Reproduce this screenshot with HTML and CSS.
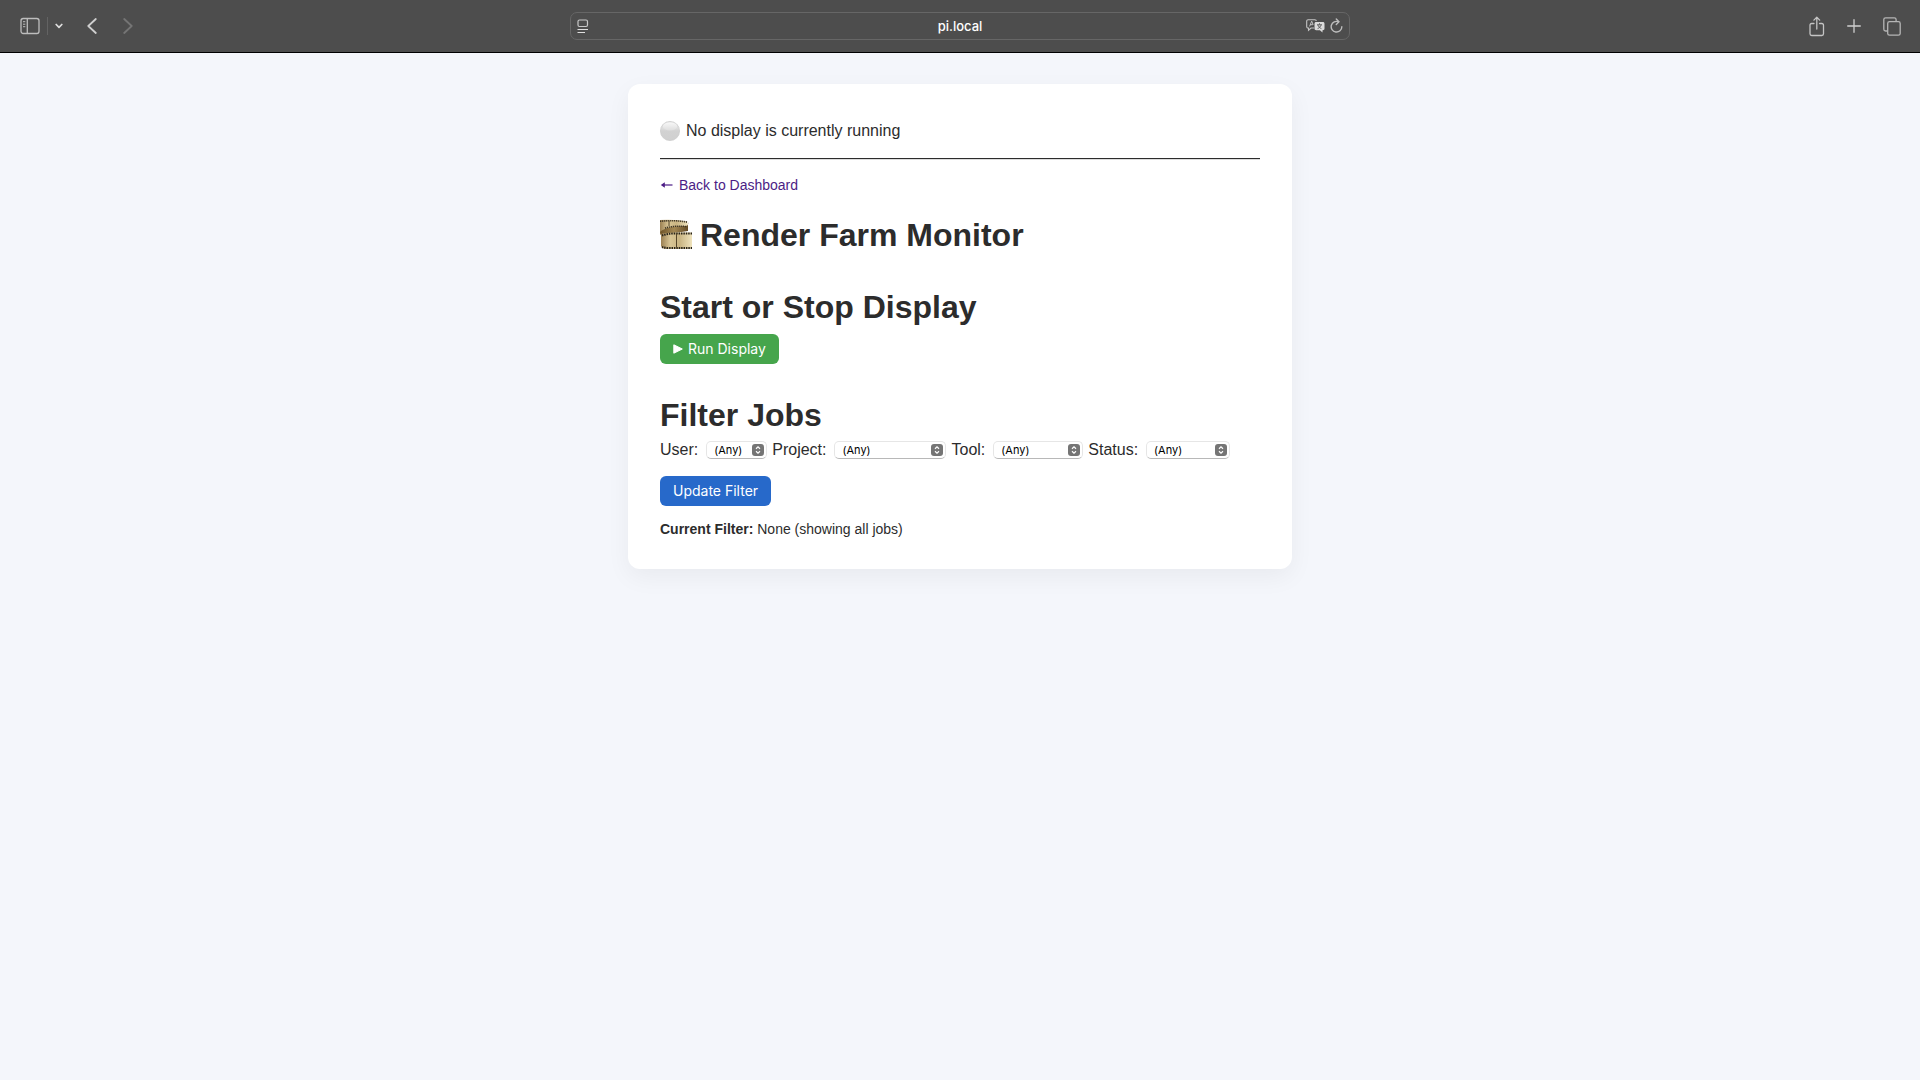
FILE: index.html
```html
<!DOCTYPE html>
<html lang="en">
<head>
<meta charset="utf-8">
<meta name="viewport" content="width=device-width, initial-scale=1">
<title>Render Farm Monitor</title>
<link rel="stylesheet" href="styles.css">
</head>
<body>
<header class="toolbar">
  <div class="tools tools-left">
    <button class="tool" type="button" aria-label="Show sidebar">
      <svg width="20" height="18" viewBox="0 0 20 18" fill="none" stroke="#bdbdbd" stroke-width="1.3"><rect x="1" y="1.500" width="18" height="15" rx="2.200"/><path d="M7.300 1.500v15"/><path d="M3 4.700h2.300M3 7.200h2.300M3 9.700h2.300" stroke-width="1"/></svg>
    </button>
    <span class="divider"></span>
    <button class="tool tool-menu" type="button" aria-label="Tab groups">
      <svg width="8" height="6" viewBox="0 0 8 6" fill="none" stroke="#dedede" stroke-width="1.700" stroke-linecap="round" stroke-linejoin="round"><path d="M1.200 1.500 4 4.300l2.800-2.800"/></svg>
    </button>
    <button class="tool tool-back" type="button" aria-label="Back">
      <svg width="10" height="16" viewBox="0 0 10 16" fill="none" stroke="#cfcfcf" stroke-width="1.800" stroke-linecap="round" stroke-linejoin="round"><path d="M8.800 1 1.300 8l7.500 7"/></svg>
    </button>
    <button class="tool tool-forward" type="button" aria-label="Forward">
      <svg width="10" height="16" viewBox="0 0 10 16" fill="none" stroke="#757575" stroke-width="1.800" stroke-linecap="round" stroke-linejoin="round"><path d="m1.200 1 7.500 7-7.500 7"/></svg>
    </button>
  </div>
  <div class="address">
    <button class="tool" type="button" aria-label="Page settings">
      <svg width="12" height="15" viewBox="0 0 12 15" fill="none" stroke="#c9c9c9" stroke-width="1.200"><rect x="1" y="1" width="9.500" height="6.500" rx="1.500"/><path d="M.5 10.500h10.500M.5 13.500h7.500" stroke="#dedede"/></svg>
    </button>
    <input class="address-input" type="text" value="pi.local" aria-label="Address">
    <div class="address-tools">
      <button class="tool" type="button" aria-label="Translate">
        <svg width="19" height="14" viewBox="0 0 19 14" fill="none"><path d="M8 9H5l-2.500 2.200V9H2.200C1.200 9 .7 8.500.7 7.500V2.200C.7 1.200 1.200.7 2.200.7h6.600c1 0 1.500.5 1.500 1.300" stroke="#c4c4c4" stroke-width="1.100"/><path d="m3.600 7.400 2.100-5.200 1.500 3.600M4.200 5.700h2.700" stroke="#c4c4c4"/><path d="M10.200 3h6.600c1.100 0 1.700.6 1.700 1.700v4.800c0 1.100-.6 1.700-1.700 1.700h-.3v2.300l-2.600-2.300h-3.700c-1.100 0-1.700-.6-1.700-1.700V4.700C8.500 3.600 9.100 3 10.200 3Z" fill="#dcdcdc"/><path d="M13.500 4.300v1.200M11 5.800h5M12 6.200c.6 1.500 1.700 2.700 3.400 3.400M15 6.200c-.6 1.500-1.700 2.700-3.400 3.400" stroke="#505050" stroke-width=".9"/></svg>
      </button>
      <button class="tool" type="button" aria-label="Reload">
        <svg width="13" height="16" viewBox="0 0 12 15" fill="none" stroke="#bdbdbd" stroke-width="1.300" stroke-linecap="round" stroke-linejoin="round"><path d="M8 3.600A5 5 0 1 0 11 8.200"/><path d="M5.800.9 8.300 3.600 5.800 6"/></svg>
      </button>
    </div>
  </div>
  <div class="tools tools-right">
    <button class="tool" type="button" aria-label="Share">
      <svg width="16" height="21" viewBox="0 0 16 21" fill="none" stroke="#c4c4c4" stroke-width="1.300" stroke-linecap="round" stroke-linejoin="round"><path d="M5 7.500H2.700C1.600 7.500 1 8.100 1 9.200v8.600c0 1.100.6 1.700 1.700 1.700h10.100c1.100 0 1.700-.6 1.700-1.700V9.200c0-1.100-.6-1.700-1.700-1.700h-2.300M7.800 13V1.300M4.900 4.100l2.900-2.900 2.900 2.900"/></svg>
    </button>
    <button class="tool" type="button" aria-label="New tab">
      <svg width="14" height="14" viewBox="0 0 14 14" fill="none" stroke="#cfcfcf" stroke-width="1.300" stroke-linecap="round"><path d="M7 .7v12.600M.7 7h12.600"/></svg>
    </button>
    <button class="tool" type="button" aria-label="Tab overview">
      <svg width="18" height="19" viewBox="0 0 18 19" fill="none" stroke="#b5b5b5" stroke-width="1.300"><path d="M4.700 14H2.600C1.500 14 .8 13.300.8 12.200V2.600C.8 1.500 1.500.8 2.600.8h8.700c1.100 0 1.800.7 1.800 1.800v2"/><rect x="4.700" y="4.700" width="12.500" height="13.500" rx="1.800"/></svg>
    </button>
  </div>
</header>

<main class="page">
  <section class="card">
    <p class="status">
      <svg width="20" height="20" viewBox="0 0 20 20" aria-hidden="true"><defs><linearGradient id="ball" x2="0" y2="1"><stop offset="0" stop-color="#d0d0d0"/><stop offset=".35" stop-color="#dedede"/><stop offset=".5" stop-color="#d2d2d2"/><stop offset="1" stop-color="#d0d0d0"/></linearGradient><linearGradient id="shine" x2="0" y2="1"><stop offset="0" stop-color="#f8f8f8"/><stop offset="1" stop-color="#dedede"/></linearGradient></defs><circle cx="10" cy="10" r="9.600" fill="url(#ball)" stroke="#cacaca" stroke-width=".7"/><ellipse cx="10" cy="5.300" rx="7.200" ry="4.100" fill="url(#shine)"/></svg>
      <span>No display is currently running</span>
    </p>
    <hr class="rule">
    <a class="back" href="#">
      <svg width="13" height="8" viewBox="0 0 13 8" aria-hidden="true"><path d="M4 4h8.500" stroke="#4b1c85" stroke-width="1.200"/><path d="M.8 4 4.800 1.300v5.400Z" fill="#4b1c85"/></svg>
      <span>Back to Dashboard</span>
    </a>
    <h1 class="heading">
      <svg width="32" height="32" viewBox="0 0 32 32" aria-hidden="true"><defs><linearGradient id="film" x2="1"><stop offset="0" stop-color="#9b8052"/><stop offset=".3" stop-color="#d9c696"/><stop offset=".6" stop-color="#c9b482"/><stop offset="1" stop-color="#efe3bd"/></linearGradient><linearGradient id="fold" x2="1"><stop offset="0" stop-color="#6d5226"/><stop offset=".5" stop-color="#a38854"/><stop offset="1" stop-color="#644b25"/></linearGradient></defs><path d="M0 1q15-1 27 1.500 2 3-1 8L4 13 0 16Z" fill="url(#film)"/><path d="M0 13q6-6 26-6 3-1 2-4v9q-6 1-14 2L2 18Z" fill="url(#fold)"/><path d="M1 15q5-1.500 14-1.500h17V30H6q-4 0-5-3Z" fill="url(#film)"/><path d="M0 2.300q15-1.500 27 .8" fill="none" stroke="#3d3424" stroke-width="1.600" stroke-dasharray="1.200 .8"/><path d="M5 9q9-2.500 21-1.500" fill="none" stroke="#3d3424" stroke-width="1.500" stroke-dasharray="1.200 .8"/><path d="M2 16.500q5-2 13-2h17" fill="none" stroke="#292318" stroke-width="2" stroke-dasharray="1.500 .9"/><path d="M2 28q3 1 7 1h23" fill="none" stroke="#292318" stroke-width="2" stroke-dasharray="1.500 .9"/><path d="M16.500 15v13.500M9 2v5" stroke="#554528"/></svg>
      <span>Render Farm Monitor</span>
    </h1>

    <h1 class="heading">Start or Stop Display</h1>
    <form class="action">
      <button class="btn btn-run" type="button">
        <svg width="10" height="10" viewBox="0 0 10 10" aria-hidden="true"><path d="M.8.8 9.300 5 .8 9.200Z" fill="#fff" stroke="#fff" stroke-linejoin="round"/></svg>
        <span>Run Display</span>
      </button>
    </form>

    <h1 class="heading">Filter Jobs</h1>
    <form class="action">
      <div class="filters">
        <div class="field">
          <label for="user">User:</label>
          <span class="picker picker-user"><select id="user"><option>(Any)</option></select><svg width="12" height="12" viewBox="0 0 12 12" aria-hidden="true"><rect width="12" height="12" rx="3" fill="#757575"/><path d="M4 4.700 6 2.800l2 1.900M4 7.300l2 1.900 2-1.900" fill="none" stroke="#fff" stroke-width="1.200"/></svg></span>
        </div>
        <div class="field">
          <label for="project">Project:</label>
          <span class="picker picker-project"><select id="project"><option>(Any)</option></select><svg width="12" height="12" viewBox="0 0 12 12" aria-hidden="true"><rect width="12" height="12" rx="3" fill="#757575"/><path d="M4 4.700 6 2.800l2 1.900M4 7.300l2 1.900 2-1.900" fill="none" stroke="#fff" stroke-width="1.200"/></svg></span>
        </div>
        <div class="field">
          <label for="tool">Tool:</label>
          <span class="picker picker-tool"><select id="tool"><option>(Any)</option></select><svg width="12" height="12" viewBox="0 0 12 12" aria-hidden="true"><rect width="12" height="12" rx="3" fill="#757575"/><path d="M4 4.700 6 2.800l2 1.900M4 7.300l2 1.900 2-1.900" fill="none" stroke="#fff" stroke-width="1.200"/></svg></span>
        </div>
        <div class="field">
          <label for="status">Status:</label>
          <span class="picker picker-status"><select id="status"><option>(Any)</option></select><svg width="12" height="12" viewBox="0 0 12 12" aria-hidden="true"><rect width="12" height="12" rx="3" fill="#757575"/><path d="M4 4.700 6 2.800l2 1.900M4 7.300l2 1.900 2-1.900" fill="none" stroke="#fff" stroke-width="1.200"/></svg></span>
        </div>
      </div>
      <button class="btn btn-update" type="button">Update Filter</button>
    </form>
    <p class="current"><strong>Current Filter:</strong> None (showing all jobs)</p>
  </section>
</main>
</body>
</html>
```
FILE: styles.css
```css
* {
  box-sizing: border-box;
}

body {
  margin: 0;
  min-height: 100vh;
  background: #f4f6fb;
  color: #2c2c2c;
  font-family: "Liberation Sans", Arial, sans-serif;
  font-size: 16px;
}

svg {
  display: block;
  flex: none;
}

/* Browser toolbar */
.toolbar {
  display: grid;
  grid-template-columns: 1fr minmax(0, 780px) 1fr;
  align-items: center;
  height: 53px;
  background: #4d4d4d;
  border-bottom: 1px solid #000;
}

.tool {
  display: flex;
  padding: 0;
  border: 0;
  background: none;
}

.tools {
  display: flex;
  align-items: center;
}

.tools-left {
  padding-left: 20px;
}

.divider {
  width: 1px;
  height: 18px;
  margin: 0 7px;
  background: #636363;
}

.tool-back {
  margin-left: 24px;
}

.tool-forward {
  margin-left: 26px;
}

.tools-right {
  justify-content: flex-end;
  gap: 22px;
  padding-right: 19px;
}

.address {
  display: grid;
  grid-template-columns: 1fr auto 1fr;
  align-items: center;
  height: 28px;
  padding: 0 6px;
  border: 1px solid #666;
  border-radius: 7px;
}

.address-input {
  width: 120px;
  padding: 0;
  border: 0;
  background: none;
  color: #fff;
  font: 500 13px/20px Inter, sans-serif;
  text-align: center;
}

.address-tools {
  display: flex;
  align-items: center;
  justify-content: flex-end;
  gap: 5px;
}

/* Page */
.page {
  padding: 31px 16px;
}

.card {
  max-width: 664px;
  margin: 0 auto;
  padding: 32px;
  background: #fff;
  border-radius: 12px;
  box-shadow: 0 8px 24px rgba(0, 0, 0, 0.05);
}

.status {
  display: flex;
  align-items: center;
  gap: 6px;
  margin: 0;
  line-height: 29px;
}

.rule {
  height: 2px;
  margin: 13px 0 17px;
  border: 0;
  border-top: 1px solid #2c2c2c;
  background: #dcdcdc;
}

.back {
  display: flex;
  align-items: center;
  gap: 6px;
  width: fit-content;
  color: #4b1c85;
  font-size: 14px;
  line-height: 16px;
  text-decoration: none;
}

.heading {
  display: flex;
  align-items: center;
  gap: 8px;
  margin: 32px 0 0;
  font-size: 32px;
  font-weight: 700;
  line-height: 40px;
}

.back + .heading {
  margin-top: 22px;
}

.action + .heading {
  margin-top: 31px;
}

.action {
  margin-top: 7px;
}

.btn {
  display: flex;
  align-items: center;
  gap: 5px;
  height: 30px;
  padding: 0 13px;
  border: 0;
  border-radius: 6px;
  color: #fff;
  font: 400 14px/20px Inter, sans-serif;
}

.btn-run {
  background: #46a54c;
}

.btn-update {
  margin-top: 14px;
  background: #2769ca;
}

.filters {
  display: flex;
  flex-wrap: wrap;
  gap: 5px;
  margin-top: -4px;
  line-height: 24px;
}

.field {
  display: flex;
  align-items: center;
  gap: 8px;
}

.picker {
  position: relative;
  display: flex;
}

.picker select {
  width: 100%;
  height: 18px;
  padding: 0 7px;
  border: 1px solid #e6e6e6;
  border-bottom-color: #b8b8b8;
  border-radius: 5px;
  appearance: none;
  background: #fff;
  color: #000;
  font: 400 11px/16px Inter, sans-serif;
}

.picker svg {
  position: absolute;
  top: 3px;
  right: 3px;
  pointer-events: none;
}

.picker-user {
  width: 61px;
}

.picker-project {
  width: 112px;
}

.picker-tool {
  width: 90px;
}

.picker-status {
  width: 84px;
}

.current {
  margin: 15px 0 0;
  font-size: 14px;
  line-height: 16px;
}
```
